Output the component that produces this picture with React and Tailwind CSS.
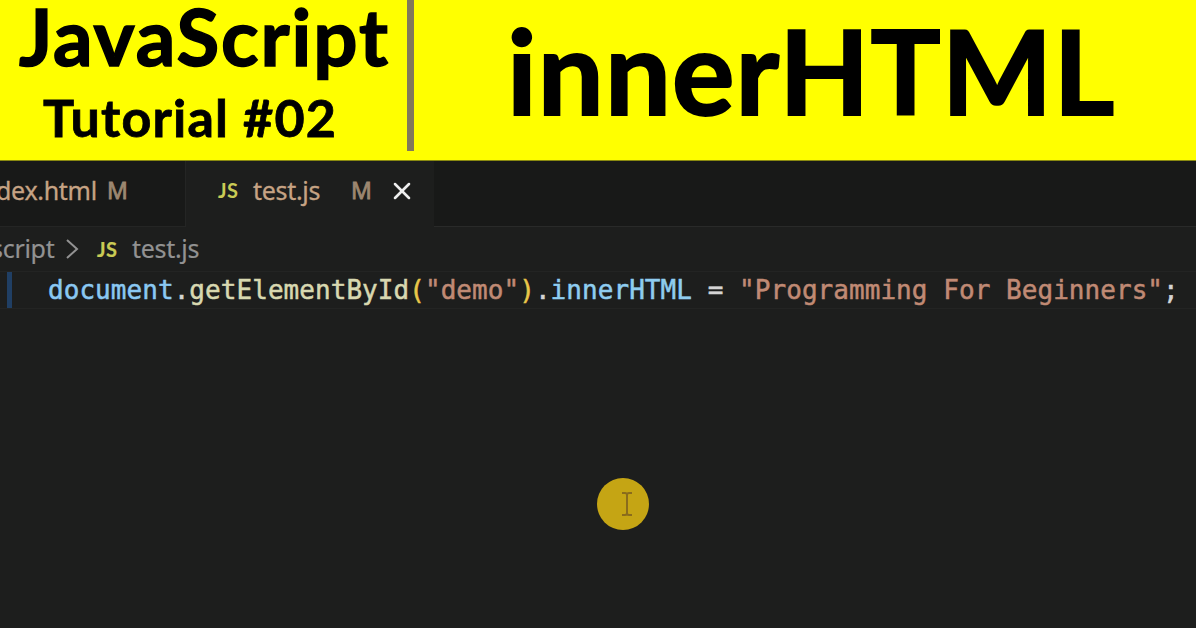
import { X, ChevronRight } from "lucide-react";

const code = [
  { text: "document", color: "text-[#8ac8f2]" },
  { text: ".", color: "text-[#d4d4d4]" },
  { text: "getElementById", color: "text-[#d8d8b0]" },
  { text: "(", color: "text-[#e8c64a]" },
  { text: '"demo"', color: "text-[#c08a74]" },
  { text: ")", color: "text-[#e8c64a]" },
  { text: ".", color: "text-[#d4d4d4]" },
  { text: "innerHTML", color: "text-[#8fcdf0]" },
  { text: " = ", color: "text-[#d4d4d4]" },
  { text: '"Programming For Beginners"', color: "text-[#c08a74]" },
  { text: ";", color: "text-[#d4d4d4]" },
];

function JsIcon() {
  return (
    <span className="w-[22px] shrink-0 font-['Lato',sans-serif] text-[20px] leading-6 font-bold tracking-[0.5px] text-[#c9cb55]">
      JS
    </span>
  );
}

function Banner() {
  return (
    <header className="flex h-[161px] shrink-0 border-b border-[#8a8a10] bg-[#ffff00] font-['Lato',sans-serif] font-bold text-black">
      {/* Series title */}
      <div className="w-[407px] shrink-0 pl-[19px] whitespace-nowrap">
        <div className="h-[92px] text-[78px] leading-[72px] tracking-[1.9px] [-webkit-text-stroke:1.5px_black]">JavaScript</div>
        <div className="pl-[24px] text-[52px] leading-[50px] tracking-[1.2px] [-webkit-text-stroke:0.8px_black]">Tutorial #02</div>
      </div>

      <div className="h-[151px] w-[7px] shrink-0 bg-[#82785a]"></div>

      {/* Topic */}
      <h1 className="pl-[93px] text-[117px] leading-[140px] tracking-[1.1px] whitespace-nowrap [-webkit-text-stroke:2px_black]">
        innerHTML
      </h1>
    </header>
  );
}

function Tabs() {
  return (
    <div className="flex h-[66px] shrink-0 bg-[#181918] font-['Noto_Sans',sans-serif] text-[25px] leading-[59px] whitespace-nowrap">
      <div className="flex w-[186px] border-r border-b border-[#242524]">
        <span className="w-[107px] tracking-[-0.3px] text-[#c6a384] [-webkit-text-stroke:0.3px]">
          <span className="-ml-[4px]">dex.html</span>
        </span>
        <span className="text-[23px] text-[#9c8770] [-webkit-text-stroke:0.8px]">M</span>
      </div>
      <div className="flex w-[248px] items-start bg-[#1d1e1d] pl-[32px]">
        <span className="flex h-[58px] items-center">
          <JsIcon />
        </span>
        <span className="ml-[13px] w-[98px] tracking-[-0.3px] text-[#c6a384] [-webkit-text-stroke:0.3px]">test.js</span>
        <span className="w-[38px] text-[23px] text-[#9c8770] [-webkit-text-stroke:0.8px]">M</span>
        <X className="mt-[16px] -ml-px h-7 w-7 text-[#eeeeee]" strokeWidth={2.2} />
      </div>
      <div className="flex-1 border-b border-[#292a29]"></div>
    </div>
  );
}

function Breadcrumbs() {
  return (
    <div className="flex h-[44px] shrink-0 items-center font-['Noto_Sans',sans-serif] text-[25px] tracking-[-0.3px] whitespace-nowrap text-[#929292] [-webkit-text-stroke:0.2px]">
      <span className="-ml-[9px] w-[68px]">script</span>
      <svg className="h-7 w-7 shrink-0" viewBox="0 0 28 28" fill="none" stroke="currentColor" strokeWidth="2">
        <path d="M8 5l10 9l-10 9" />
      </svg>
      <span className="ml-[10px] flex items-center">
        <JsIcon />
      </span>
      <span className="ml-[13px]">test.js</span>
    </div>
  );
}

export default function App() {
  return (
    <div className="flex h-[628px] w-[1196px] flex-col overflow-hidden bg-[#1d1e1d]">
      <Banner />
      <Tabs />
      <Breadcrumbs />

      {/* Editor */}
      <main className="relative flex-1">
        <div className="flex h-[38px] items-center border-y border-[#232423]">
          <div className="ml-[7px] h-[36px] w-[5px] shrink-0 bg-[#203f64]"></div>
          <pre className="ml-[36px] font-['DejaVu_Sans_Mono',monospace] text-[26px] leading-[38px] tracking-[0.05px] [-webkit-text-stroke:0.5px]">
            {code.map((token, i) => (
              <span key={i} className={token.color}>{token.text}</span>
            ))}
          </pre>
        </div>

        {/* Highlighted mouse pointer */}
        <div className="absolute top-[207px] left-[597px] flex h-[52px] w-[52px] items-center justify-center rounded-full bg-[#c5a514]">
          <svg className="ml-[7px] h-[26px] w-[14px]" viewBox="0 0 14 26" fill="none" stroke="#8a6c1c" strokeWidth="2">
            <path d="M2 2h3q2 0 2 2q0-2 2-2h3M7 4v18M2 24h3q2 0 2-2q0 2 2 2h3" />
          </svg>
        </div>
      </main>
    </div>
  );
}
